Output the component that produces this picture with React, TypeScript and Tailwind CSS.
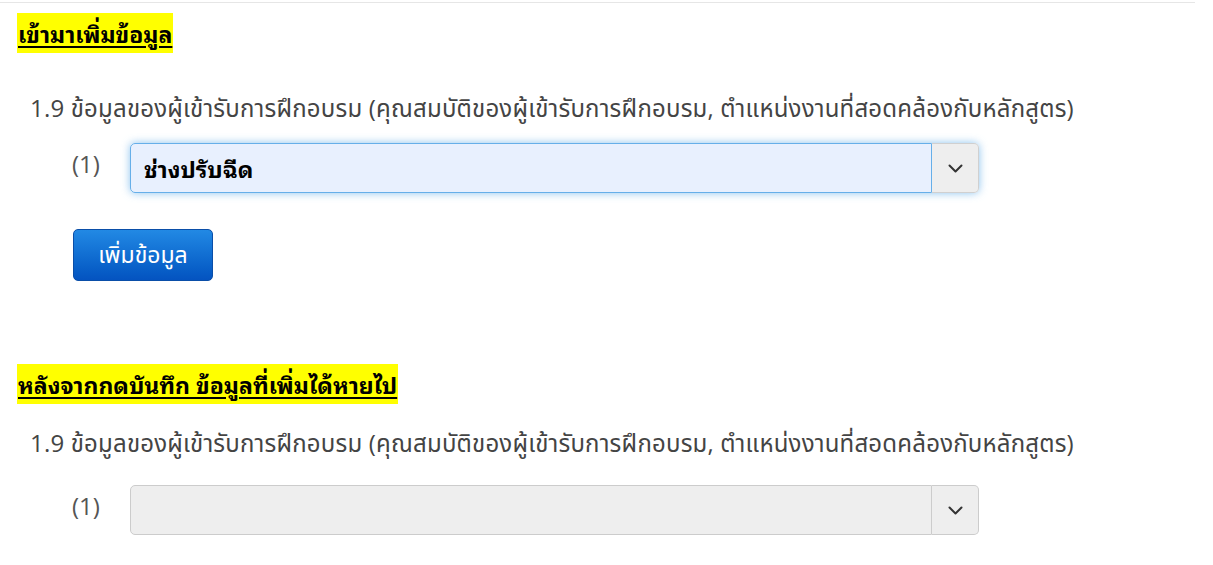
import React from "react";

const Chevron = () => (
  <svg width="15" height="9" viewBox="0 0 15 9" fill="none">
    <path d="M1.5 1.5 L7.5 7.5 L13.5 1.5" stroke="#333" strokeWidth="2" strokeLinecap="round" strokeLinejoin="round" />
  </svg>
);

const body = "[font-family:'Open_Sans','Noto_Sans_Thai',sans-serif]";

function Heading({ title }: { title: string }) {
  return (
    <div className="pl-[17px] h-[40px]">
      <span className="inline-block h-[40px] bg-[#ffff00] font-bold underline underline-offset-[3px] text-[23px] leading-[40px] text-black px-[1px] [font-family:'Noto_Sans_Thai_Looped','Noto_Sans_Thai',sans-serif]">
        {title}
      </span>
    </div>
  );
}

function Line() {
  return (
    <div className={"pl-[30px] h-[32px] whitespace-nowrap text-[24px] tracking-[0.2px] leading-[32px] text-[#444] " + body}>
      1.9 ข้อมูลของผู้เข้ารับการฝึกอบรม (คุณสมบัติของผู้เข้ารับการฝึกอบรม, ตำแหน่งงานที่สอดคล้องกับหลักสูตร)
    </div>
  );
}

function SelectRow({ filled }: { filled: boolean }) {
  return (
    <div className="flex items-start h-[50px]">
      <div className={"w-[130px] pl-[72px] pt-[5px] text-[24px] leading-[32px] text-[#555] " + body}>(1)</div>
      <div
        className={
          "flex w-[849px] h-[50px] rounded-[5px] " +
          (filled ? "shadow-[0_0_9px_rgba(102,175,233,0.75)]" : "")
        }
      >
        <div
          className={
            "flex-1 flex items-center pl-[13px] rounded-l-[5px] border text-[23px] font-bold text-black [font-family:'Noto_Sans_Thai_Looped','Noto_Sans_Thai',sans-serif] " +
            (filled ? "bg-[#e8f0fe] border-[#66afe9]" : "bg-[#eeeeee] border-[#cccccc]")
          }
        >
          {filled ? "ช่างปรับฉีด" : ""}
        </div>
        <div
          className={
            "w-[47px] flex items-center justify-center bg-[#eeeeee] border border-l-0 rounded-r-[5px] " +
            (filled ? "border-[#d0d0d0]" : "border-[#cccccc]")
          }
        >
          <Chevron />
        </div>
      </div>
    </div>
  );
}

export default function App() {
  return (
    <div className="w-[1213px] h-[565px] bg-white overflow-hidden">
      <div className="h-[3px] border-b border-[#e6e6e6] w-[1195px]" />
      <div className="pt-[10px]">
        <Heading title="เข้ามาเพิ่มข้อมูล" />
        <div className="mt-[39px]">
          <Line />
        </div>
        <div className="mt-[19px]">
          <SelectRow filled />
        </div>
        <div className="pl-[73px] mt-[36px]">
          <button className={"w-[140px] h-[52px] rounded-[5px] text-white text-[23px] bg-gradient-to-b from-[#2289e4] to-[#0453c0] border border-[#0a4ea8] pb-[2px] " + body}>
            เพิ่มข้อมูล
          </button>
        </div>
        <div className="mt-[83px]">
          <Heading title="หลังจากกดบันทึก ข้อมูลที่เพิ่มได้หายไป" />
        </div>
        <div className="mt-[23px]">
          <Line />
        </div>
        <div className="mt-[26px]">
          <SelectRow filled={false} />
        </div>
      </div>
    </div>
  );
}
